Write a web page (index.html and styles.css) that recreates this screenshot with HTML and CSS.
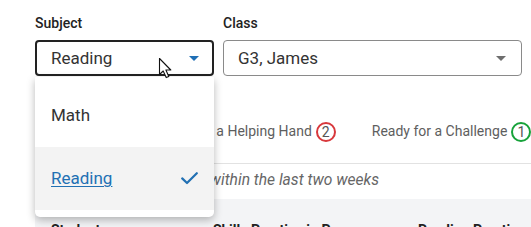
FILE: index.html
```html
<!DOCTYPE html>
<html lang="en">
<head>
<meta charset="utf-8">
<title>Filters</title>
<link rel="stylesheet" href="styles.css">
</head>
<body>
<div class="page">
  <div class="filters">
    <div class="field field-subject">
      <div class="label">Subject</div>
      <div class="select select-open">
        <span class="select-value">Reading</span>
        <span class="caret caret-blue"></span>
      </div>
      <div class="menu">
        <div class="menu-item">Math</div>
        <div class="menu-item menu-item-selected">
          <span class="menu-link">Reading</span>
          <svg class="check" width="17" height="13" viewBox="0 0 17 13"><polyline points="1.2,6.4 6,11 15.8,1.2" fill="none" stroke="#2170b3" stroke-width="2.2" stroke-linecap="round" stroke-linejoin="round"/></svg>
        </div>
      </div>
      <svg class="cursor" width="14" height="22" viewBox="0 0 14 22"><path d="M1.5 1.5 L1.5 17.5 L5.2 14 L8.2 20.6 L10.8 19.5 L7.9 13 L12.8 13 Z" fill="#fff" stroke="#111" stroke-width="1.1" stroke-linejoin="round"/></svg>
    </div>
    <div class="field field-class">
      <div class="label">Class</div>
      <div class="select">
        <span class="select-value">G3, James</span>
        <span class="caret caret-gray"></span>
      </div>
    </div>
  </div>

  <div class="tabs">
    <div class="tab"><span class="tab-text">All Students</span><span class="badge badge-gray">3</span></div>
    <div class="tab"><span class="tab-text">Needs a Helping Hand</span><span class="badge badge-red">2</span></div>
    <div class="tab"><span class="tab-text">Ready for a Challenge</span><span class="badge badge-green">1</span></div>
  </div>

  <div class="note">Students with activity within the last two weeks</div>

  <div class="table-head">
    <div class="th">Student</div>
    <div class="th">Skills Practice in Progress</div>
    <div class="th">Reading Practice</div>
  </div>
</div>
</body>
</html>
```

FILE: styles.css
```css
* { box-sizing: border-box; }

html, body {
  margin: 0;
  padding: 0;
  background: #fff;
  overflow: hidden;
}

body {
  width: 531px;
  height: 227px;
  font-family: Roboto, "Liberation Sans", sans-serif;
  color: #222;
}

.page {
  padding: 15px 0 0 35px;
}

.filters {
  display: flex;
  gap: 9px;
  padding-right: 9px;
}

.field {
  display: flex;
  flex-direction: column;
}

.field-subject {
  width: 179px;
  position: relative;
  z-index: 2;
}

.field-class {
  flex: 1;
}

.label {
  font-size: 14px;
  line-height: 16px;
  font-weight: 500;
  color: #222;
  margin-bottom: 9px;
}

.select {
  height: 36px;
  border: 1px solid #8a8a8a;
  border-radius: 4px;
  display: flex;
  align-items: center;
  justify-content: space-between;
  padding: 0 15px 0 14px;
  background: #fff;
}

.select-open {
  border: 2px solid #222;
  padding: 0 13px 0 14px;
}

.select-value {
  font-size: 17px;
  color: #333;
}

.caret {
  width: 0;
  height: 0;
  border-left: 5px solid transparent;
  border-right: 5px solid transparent;
  margin-top: 1px;
}

.caret-blue { border-top: 5px solid #1f6fb5; }
.caret-gray { border-top: 5px solid #6e6e6e; }

.menu {
  position: absolute;
  top: calc(100% + 1px);
  left: 0;
  width: 179px;
  padding: 7px 0 7px;
  background: #fff;
  border-radius: 0 0 5px 5px;
  box-shadow: 0 3px 9px rgba(0, 0, 0, 0.28);
}

.menu-item {
  height: 63px;
  display: flex;
  align-items: center;
  justify-content: space-between;
  padding: 0 16px 1px 16px;
  font-size: 17px;
  color: #333;
}

.menu-item-selected {
  background: #f3f3f3;
}

.menu-link {
  color: #2170b3;
  text-decoration: underline;
  text-decoration-thickness: 1px;
  text-underline-offset: 2px;
}

.check {
  display: block;
}

.cursor {
  position: absolute;
  left: 123px;
  top: 42px;
}

.tabs {
  display: flex;
  gap: 36px;
  margin-top: 46px;
  padding: 0 0 21px 3px;
  border-bottom: 1px solid #e2e2e2;
  white-space: nowrap;
}

.tab {
  display: flex;
  align-items: center;
  gap: 4px;
  height: 20px;
}

.tab-text {
  font-size: 14px;
  line-height: 16px;
  color: #5e5e5e;
  padding-bottom: 3px;
}

.badge {
  width: 20px;
  height: 20px;
  border-radius: 50%;
  border: 2px solid #888;
  display: flex;
  align-items: center;
  justify-content: center;
  font-size: 14px;
  color: #555;
  flex: none;
}

.badge-red { border-color: #d8383c; }
.badge-green { border-color: #17a23a; }

.note {
  height: 35px;
  padding: 7px 0 0 27px;
  font-size: 15.6px;
  line-height: 18px;
  font-style: italic;
  color: #666;
  white-space: nowrap;
}

.table-head {
  display: grid;
  grid-template-columns: 162px 205px 1fr;
  background: #f3f4f6;
  height: 40px;
  white-space: nowrap;
}

.th {
  padding: 23px 0 0 16px;
  font-size: 14px;
  line-height: 16px;
  font-weight: 700;
  color: #222;
}
```
